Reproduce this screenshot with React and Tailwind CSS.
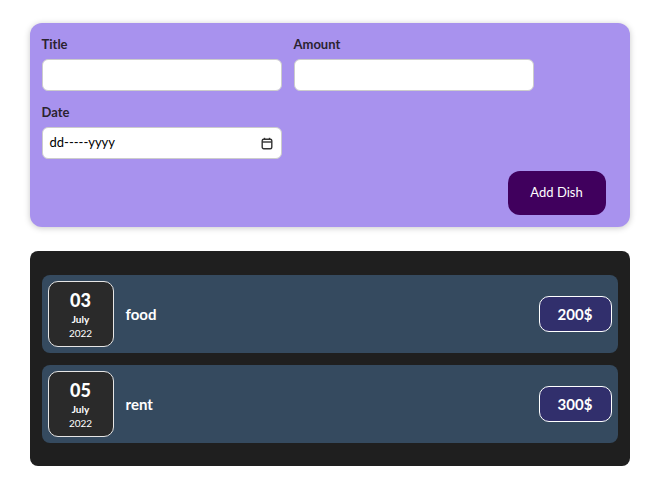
import React from 'react';

const expenses = [
  { id: 'e1', day: '03', month: 'July', year: '2022', title: 'food', amount: 200 },
  { id: 'e2', day: '05', month: 'July', year: '2022', title: 'rent', amount: 300 }
];

function CalendarIcon() {
  return (
    <svg width="12" height="13" viewBox="0 0 12 13" fill="none" stroke="#333" strokeWidth="1.4">
      <rect x="1.2" y="2.2" width="9.6" height="9.6" rx="1.5" />
      <line x1="1.2" y1="5" x2="10.8" y2="5" />
      <line x1="3.5" y1="0.8" x2="3.5" y2="3" />
      <line x1="8.5" y1="0.8" x2="8.5" y2="3" />
    </svg>
  );
}

function Field({ label, children }) {
  return (
    <div className="w-[240px]">
      <label className="mb-1.5 block text-[13px] font-bold leading-[18px] text-[#2b2330]">{label}</label>
      {children}
    </div>
  );
}

function ExpenseItem({ item }) {
  return (
    <li className="flex items-center rounded-lg bg-[#354a5f] p-1.5">
      <div className="flex h-[66px] w-[66px] flex-col items-center justify-center rounded-[10px] border border-[#e6e6e6] bg-[#2a2a2a] text-white">
        <div className="text-[18px] font-black leading-[22px]">{item.day}</div>
        <div className="mt-0.5 text-[10px] font-bold leading-[13px]">{item.month}</div>
        <div className="text-[10px] leading-[14px]">{item.year}</div>
      </div>
      <h2 className="ml-3 flex-1 text-[15px] font-bold text-white">{item.title}</h2>
      <div className="flex h-9 w-[73px] items-center justify-center rounded-[10px] border border-white bg-[#312f6c] text-[15px] font-bold text-white">
        {item.amount}$
      </div>
    </li>
  );
}

export default function App() {
  return (
    <div className="min-h-[493px] bg-white pt-[23px] font-['Lato','Noto_Sans',sans-serif]">
      <section className="mx-auto w-[600px] rounded-xl bg-[#a892ee] p-3 shadow-[0_1px_6px_rgba(0,0,0,0.22)]">
        <div className="flex flex-wrap gap-3">
          <Field label="Title">
            <input type="text" className="h-8 w-full rounded-md border border-[#ccc] bg-white px-2 outline-none" />
          </Field>
          <Field label="Amount">
            <input type="text" className="h-8 w-full rounded-md border border-[#ccc] bg-white px-2 outline-none" />
          </Field>
          <Field label="Date">
            <div className="flex h-8 w-full items-center justify-between rounded-md border border-[#ccc] bg-white pl-[7px] pr-2 text-[13px] text-black">
              <span>dd-----yyyy</span>
              <CalendarIcon />
            </div>
          </Field>
        </div>
        <div className="mt-3 flex justify-end pr-3">
          <button className="h-11 w-[98px] rounded-xl bg-[#40005d] text-[13px] text-white">Add Dish</button>
        </div>
      </section>

      <section className="mx-auto mt-6 w-[600px] rounded-lg bg-[#1f1f1f] px-3 pb-[23px] pt-6">
        <ul className="flex flex-col gap-3">
          {expenses.map((item) => (
            <ExpenseItem key={item.id} item={item} />
          ))}
        </ul>
      </section>
    </div>
  );
}
